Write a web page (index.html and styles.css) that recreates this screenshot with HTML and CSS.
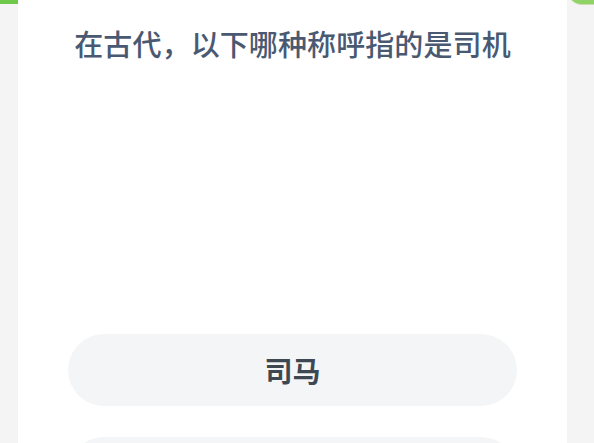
FILE: index.html
```html
<!DOCTYPE html>
<html lang="zh">
<head>
<meta charset="utf-8">
<link rel="stylesheet" href="styles.css">
</head>
<body>
<div class="page">
  <div class="side side-left"><div class="green-left"></div></div>
  <div class="card">
    <h1 class="question">在古代，以下哪种称呼指的是司机</h1>
    <div class="options">
      <div class="option">司马</div>
      <div class="option"></div>
    </div>
  </div>
  <div class="side side-right"><div class="green-right"></div></div>
</div>
</body>
</html>
```
FILE: styles.css
```css
html, body {
  margin: 0;
  padding: 0;
  background: #f4f4f4;
  overflow: hidden;
}
.page {
  display: flex;
  width: 594px;
  height: 443px;
  overflow: hidden;
  font-family: "Noto Sans CJK SC", "Noto Sans", sans-serif;
}
.side {
  background: #f4f4f4;
  flex: none;
  position: relative;
  overflow: hidden;
}
.side-left { width: 18px; }
.side-right { width: 27px; }
.green-left {
  height: 4px;
  background: #6ec94a;
}
.green-right {
  position: absolute;
  top: -16px;
  left: 1px;
  width: 40px;
  height: 20px;
  border-radius: 0 0 0 14px;
  background: #8fd266;
  border-bottom: 1px solid #c9dcb0;
}
.card {
  flex: none;
  width: 549px;
  background: #ffffff;
  display: flex;
  flex-direction: column;
}
.question {
  margin: 23px 0 0;
  font-size: 29px;
  line-height: 40px;
  font-weight: 500;
  color: #4a5972;
  text-align: center;
  letter-spacing: 0.1px;
}
.options {
  margin-top: 271px;
  padding: 0 50px;
  display: flex;
  flex-direction: column;
  gap: 31px;
}
.option {
  height: 72px;
  flex: none;
  border-radius: 36px;
  background: #f3f5f7;
  display: flex;
  align-items: center;
  justify-content: center;
  font-size: 28px;
  font-weight: 700;
  color: #3e4852;
}
```
